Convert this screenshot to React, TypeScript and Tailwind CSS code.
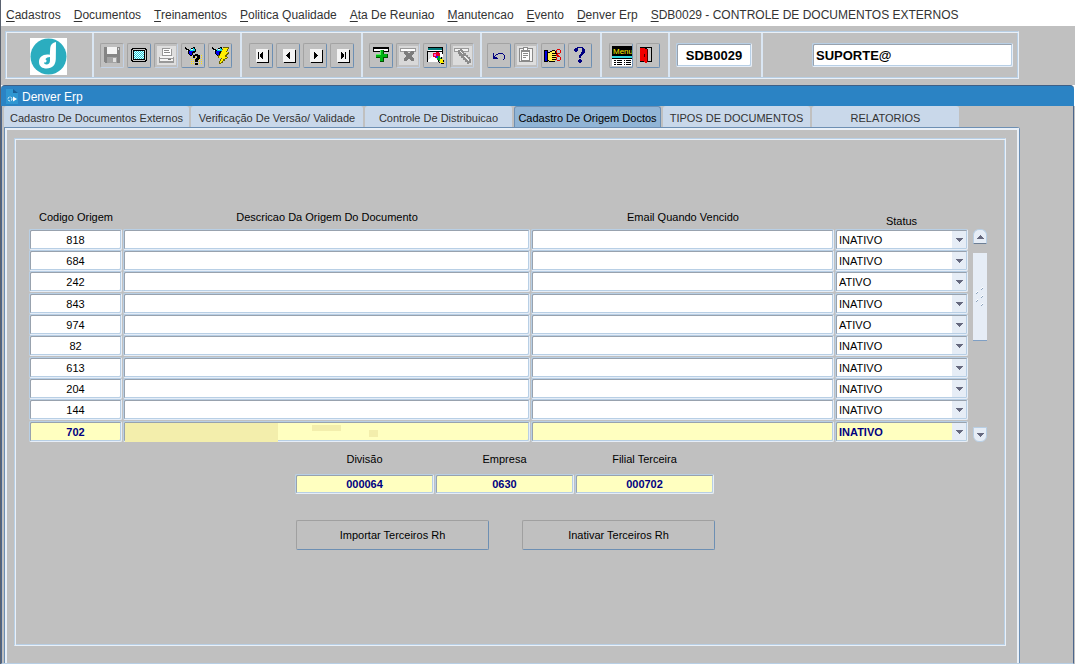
import { useState } from 'react';
import type { ReactNode } from 'react';
import clsx from 'clsx';

interface OrigemRow {
  codigo: string;
  descricao: string;
  email: string;
  status: 'ATIVO' | 'INATIVO';
}

interface ToolButton {
  label: string;
  icon: ReactNode;
  disabled?: boolean;
}

const menus = [
  'Cadastros',
  'Documentos',
  'Treinamentos',
  'Politica Qualidade',
  'Ata De Reuniao',
  'Manutencao',
  'Evento',
  'Denver Erp',
  'SDB0029 - CONTROLE DE DOCUMENTOS EXTERNOS',
];

const tabs = [
  { label: 'Cadastro De Documentos Externos', width: 'w-[185px]' },
  { label: 'Verificação De Versão/ Validade', width: 'w-[172px]' },
  { label: 'Controle De Distribuicao', width: 'w-[147px]' },
  { label: 'Cadastro De Origem Doctos', width: 'w-[147px]' },
  { label: 'TIPOS DE DOCUMENTOS', width: 'w-[147px]' },
  { label: 'RELATORIOS', width: 'w-[147px]' },
];

const initialRows: OrigemRow[] = [
  { codigo: '818', descricao: '', email: '', status: 'INATIVO' },
  { codigo: '684', descricao: '', email: '', status: 'INATIVO' },
  { codigo: '242', descricao: '', email: '', status: 'ATIVO' },
  { codigo: '843', descricao: '', email: '', status: 'INATIVO' },
  { codigo: '974', descricao: '', email: '', status: 'ATIVO' },
  { codigo: '82', descricao: '', email: '', status: 'INATIVO' },
  { codigo: '613', descricao: '', email: '', status: 'INATIVO' },
  { codigo: '204', descricao: '', email: '', status: 'INATIVO' },
  { codigo: '144', descricao: '', email: '', status: 'INATIVO' },
  { codigo: '702', descricao: '', email: '', status: 'INATIVO' },
];

// Sunken two-pixel frame shared by every text field
const fieldFrame =
  'rounded-[2px] border border-t-[#b8cfe5] border-l-[#b8cfe5] border-r-[#e6eef8] border-b-[#e6eef8] shadow-[inset_1px_1px_0_#98a2ae,inset_-1px_-1px_0_#b8cfe5] outline-none';

const groupFrame =
  'border border-t-[#b8cfe5] border-l-[#b8cfe5] border-r-[#e9f0f8] border-b-[#e9f0f8] shadow-[inset_1px_1px_0_#e9f0f8,inset_-1px_-1px_0_#b8cfe5]';

function Icon({ children }: { children: ReactNode }) {
  return (
    <svg viewBox="1 1 22 23" width="22" height="23" shapeRendering="crispEdges" aria-hidden="true">
      {children}
    </svg>
  );
}

function NavIcon({ children }: { children: ReactNode }) {
  return (
    <Icon>
      <path d="M8 7h12v13h-12z" fill="#000" />
      <path d="M7 6h12v13h-12z" fill="#f4f4f4" />
      {children}
    </Icon>
  );
}

function Flashlight() {
  return (
    <>
      <path d="M4 4h1v1h1v1h2v1h1v-1h1v-1h2v-1h2v2h1v3h-1v1h-2v2h-1v1h-2v-1h-1v-1h-1v-3h-1v-1h-1v-1h-1z" fill="#000" />
      <path d="M9 6h3v-1h1v1h1v2h-5z" fill="#00d8ee" />
      <path d="M6 7h1v1h-1zM10 7h2v-1h-2z" fill="#e8ffff" />
      <path d="M8 8h4v1h-1v3h-2v-1h-1z" fill="#0000f0" />
    </>
  );
}

const fileTools: ToolButton[] = [
  {
    label: 'Salvar',
    disabled: true,
    icon: (
      <Icon>
        <path d="M4 4h16v16h-15v-1h-1z" fill="#858585" />
        <path d="M7 4h10v7h-10z" fill="#f4f4f4" />
        <path d="M18 5h1v2h-1z" fill="#d8d8d8" />
        <path d="M7 14h10v6h-10z" fill="#a4a4a4" />
        <path d="M13 15h3v4h-3z" fill="#e0e0e0" />
      </Icon>
    ),
  },
  {
    label: 'Tela',
    icon: (
      <Icon>
        <path d="M5 5h14v1h1v12h-1v1h-14v-1h-1v-12h1z" fill="#000" />
        <path d="M6 6h12v1h1v10h-1v1h-12v-1h-1v-10h1z" fill="#c8c8c8" />
        <path d="M6 7h12v10h-12z" fill="#000" />
        <path d="M7 8h10v8h-10z" fill="#e8ffff" />
        {[8, 9, 10, 11, 12, 13, 14, 15].map((y) => (
          <path key={y} d={`M${7 + (y % 2)} ${y}.5h10`} stroke="#20c8d8" strokeDasharray="1 1" />
        ))}
        <path d="M17 8h1v8h-1z" fill="#000" />
      </Icon>
    ),
  },
  {
    label: 'Imprimir',
    disabled: true,
    icon: (
      <Icon>
        <path d="M3 3h19v19h-19z" fill="#dedede" />
        <path d="M8 5h8v1h2v7h-10z" fill="#999" />
        <path d="M9 6h8v6h-8z" fill="#fff" />
        <path d="M10 7h5v1h-5zM10 9h6v1h-6z" fill="#888" />
        <path d="M5 14h15v6h-15z" fill="#999" />
        <path d="M6 13h13v2h-13zM6 16h13v2h-13z" fill="#f4f4f4" />
        <path d="M14 16h3v1h-3z" fill="#777" />
      </Icon>
    ),
  },
  {
    label: 'Entrar consulta',
    icon: (
      <Icon>
        {[12, 14, 16, 18, 20].map((y) => (
          <path key={y} d={`M${y > 13 ? 10 : 18} ${y}.5h${y > 13 ? 12 : 4}`} stroke="#ffe800" strokeDasharray="1 1" />
        ))}
        <Flashlight />
        <path d="M12 12h2v-1h3v1h2v4h-1v1h-1v2h-3v-3h1v-1h1v-2h-2v2h-2zM14 20h3v2h-3z" fill="#000" />
      </Icon>
    ),
  },
  {
    label: 'Executar consulta',
    icon: (
      <Icon>
        <Flashlight />
        <path d="M15 4h6v2h-1v2h-1v1h2v2h-1v1h-1v2h1v1h-1v1h-2v2h-2v2h-2v1h-2v-3h1v-2h1v-1h-3v-3h2v-2h1v-2h1v-2h1z" fill="#6b6400" />
        <path d="M15 5h5v1h-1v2h-1v1h2v1h-1v1h-1v1h-1v2h2v1h-2v1h-2v2h-1v1h-1v1h-1v-2h1v-2h1v-1h-3v-2h1v-2h1v-2h1v-2h1z" fill="#ffee00" />
      </Icon>
    ),
  },
];

const navTools: ToolButton[] = [
  {
    label: 'Primeiro registro',
    icon: (
      <NavIcon>
        <path d="M9 9h1v7h-1zM14 9v7h-1v-1h-1v-1h-1v-3h1v-1h1v-1z" fill="#000" />
      </NavIcon>
    ),
  },
  {
    label: 'Registro anterior',
    icon: (
      <NavIcon>
        <path d="M14 9v7h-1v-1h-1v-1h-1v-1h-1v-1h1v-1h1v-1h1v-1z" fill="#000" />
      </NavIcon>
    ),
  },
  {
    label: 'Próximo registro',
    icon: (
      <NavIcon>
        <path d="M11 9v7h1v-1h1v-1h1v-1h1v-1h-1v-1h-1v-1h-1v-1z" fill="#000" />
      </NavIcon>
    ),
  },
  {
    label: 'Último registro',
    icon: (
      <NavIcon>
        <path d="M11 9v7h1v-1h1v-1h1v-3h-1v-1h-1v-1zM15 9h1v7h-1z" fill="#000" />
      </NavIcon>
    ),
  },
];

const recordTools: ToolButton[] = [
  {
    label: 'Inserir registro',
    icon: (
      <Icon>
        <path d="M4 4h16v5h-16z" fill="#000" />
        <path d="M5 6h14v2h-14z" fill="#fff" />
        <path d="M11 7h4v4h4v4h-4v4h-4v-4h-4v-4h4z" fill="#005000" />
        <path d="M11 7h3v4h4v3h-4v4h-3v-4h-4v-3h4z" fill="#00b414" />
        <path d="M11 7h1v5h-5v-1h4z" fill="#5cf060" />
      </Icon>
    ),
  },
  {
    label: 'Excluir registro',
    disabled: true,
    icon: (
      <Icon>
        <path d="M3 3h19v19h-19z" fill="#d8d8d8" />
        <path d="M4 5h16v4h-16z" fill="#999" />
        <path d="M5 6h14v2h-14z" fill="#fff" />
        <path d="M8 8h3v1h1v1h2v-1h1v-1h3v3h-1v1h-1v2h1v1h1v3h-3v-1h-1v-1h-2v1h-1v1h-3v-3h1v-1h1v-2h-1v-1h-1z" fill="#7c7c7c" />
      </Icon>
    ),
  },
  {
    label: 'Editar',
    icon: (
      <Icon>
        <path d="M5 5h15v9h-15z" fill="#fff" />
        <path d="M5 5h15v2h-15z" fill="#007878" />
        <path d="M4 8h15v1h-15zM4 8h1v11h-1zM5 4h15v1h-15zM19 5h1v6h-1zM4 18h12v1h-12z" fill="#000" />
        <path d="M5 9h12v9h-12z" fill="#e4e4e4" />
        <path d="M5 18l5-6 3 4 3 2v1h-11z" fill="#fff" />
        <path d="M10 10h3v-1h3v1h1v4h-2v1h-3v-1h-2z" fill="#e8002c" />
        <path d="M11 11h2v2h-2z" fill="#ff50e8" />
        <path d="M13 13h2v2h-2z" fill="#2020ff" />
        <path d="M15 13h2v2h1v3h-2v-1h-2v-2h1z" fill="#00b020" />
        <path d="M17 16h3v2h1v3h-2v-1h-2z" fill="#fff000" />
        <path d="M18 14h1v2h-1zM15 17h1v2h1v1h-1v-1h-1zM20 17h1v2h-1zM18 20h3v1h-3z" fill="#000" />
      </Icon>
    ),
  },
  {
    label: 'Limpar registro',
    disabled: true,
    icon: (
      <Icon>
        <path d="M3 3h19v19h-19z" fill="#dcdcdc" />
        <path d="M4 5h15v4h-15z" fill="#999" />
        <path d="M5 6h13v2h-13z" fill="#f4f4f4" />
        <path d="M8 7h2v-1h2v1h1v1h1v2h2v2h2v2h2v2h1v4h-2v1h-2v-2h-2v-2h-2v-2h-2v-2h-2v-2h-1z" fill="#8c8c8c" />
        <path d="M10 8h1v1h1v1h1v1h-1v-1h-1v-1h-1zM14 13h2v1h1v1h1v1h1v2h-1v-1h-1v-1h-1v-1h-1v-1h-1z" fill="#eee" />
      </Icon>
    ),
  },
];

const editTools: ToolButton[] = [
  {
    label: 'Desfazer',
    icon: (
      <Icon>
        <path d="M6 10h1v3h1v-1h1v-1h2v-1h5v1h1v1h1v4h-1v1h-1v-1h1v-4h-1v-1h-5v1h-2v1h-1v1h2v1h1v1h-5z" fill="#000080" />
      </Icon>
    ),
  },
  {
    label: 'Colar',
    disabled: true,
    icon: (
      <Icon>
        <path d="M3 3h19v19h-19z" fill="#dedede" />
        <path d="M5 5h14v14h-14z" fill="#8a8a8a" />
        <path d="M6 6h12v12h-12z" fill="#f6f6f6" />
        <path d="M9 4h5v3h2v11h-9v-11h2z" fill="#8a8a8a" />
        <path d="M10 5h3v2h-3zM8 9h7v8h-7z" fill="#fff" />
        <path d="M9 10h5v1h-5zM9 12h5v1h-5zM9 14h3v1h-3z" fill="#8a8a8a" />
      </Icon>
    ),
  },
  {
    label: 'Recortar',
    icon: (
      <Icon>
        <path d="M3 7h4v12h-4z" fill="#000" />
        <path d="M4 8h2v10h-2z" fill="#0000e0" />
        <path d="M7 9h2v-1h2v-1h3v1h1v2h2v2h-2v5h-1v2h-6v-1h-1z" fill="#000" />
        <path d="M7 10h2v-1h2v-1h3v2h-3v1h5v1h-5v1h4v1h-4v1h4v1h-4v1h3v1h-6v-1h-1z" fill="#ffee50" />
        <path d="M16 6h3v1h1v3h-1v1h-2v1h1v1h1v1h1v3h-1v1h-3v-1h-1v-3h1v-1h-1v-2h1v-1h-1v-3h1zM16 7v3h3v-3zM16 14v3h3v-3z" fill="#e00000" fillRule="evenodd" />
      </Icon>
    ),
  },
  {
    label: 'Ajuda',
    icon: (
      <Icon>
        <path d="M7 5h2v-1h6v1h1v1h1v4h-1v1h-1v1h-1v1h-1v2h-2v-3h1v-1h1v-2h1v-4h-4v3h-1v1h-2v-1h-1v-2h1zM10 17h1v-1h2v1h1v2h-1v1h-2v-1h-1z" fill="#000080" />
      </Icon>
    ),
  },
];

const exitTools: ToolButton[] = [
  {
    label: 'Menu',
    icon: (
      <Icon>
        <path d="M3 3h20v10h-20z" fill="#000" />
        <text x="4" y="11" fontFamily="Liberation Sans Narrow, Liberation Sans, sans-serif" fontSize="8" fill="#fff200">
          Menu
        </text>
        <path d="M3 13h20v2h-20z" fill="#30d8e0" />
        <path d="M3 15h20v1h-20z" fill="#000" />
        <path d="M3 16h20v7h-20z" fill="#fff" />
        <path d="M5 17h2v1h-2zM8 17h5v1h-5zM15 17h1v1h-1zM17 17h5v1h-5zM5 19h2v1h-2zM8 19h5v1h-5zM15 19h1v1h-1zM17 19h5v1h-5zM5 21h2v1h-2zM8 21h5v1h-5zM15 21h1v1h-1zM17 21h5v1h-5z" fill="#000" />
      </Icon>
    ),
  },
  {
    label: 'Sair',
    icon: (
      <Icon>
        <path d="M4 4h12v15h-12z" fill="#000" />
        <path d="M11 5h4v13h-4z" fill="#c8c8c8" />
        <path d="M4 5h5v1h2v14h-2v-1h-1v-1h-4z" fill="#f00000" />
        <path d="M8 11h1v3h-1zM11 6h1v13h-1z" fill="#500000" />
      </Icon>
    ),
  },
];

function ToolGroup({ tools, className }: { tools: ToolButton[]; className: string }) {
  return (
    <div className={clsx('flex h-full shrink-0 items-start gap-[3px] border-r-2 border-[#dae6f3] pt-[10px]', className)}>
      {tools.map((tool) => (
        <button
          key={tool.label}
          type="button"
          aria-label={tool.label}
          disabled={tool.disabled}
          className={clsx(
            'h-[25px] w-6 shrink-0 overflow-hidden rounded-[2px] border border-t-[#a3a3a3] border-l-[#a3a3a3]',
            tool.disabled ? 'border-r-[#c3d2e6] border-b-[#c3d2e6]' : 'border-r-[#6d8fb3] border-b-[#6d8fb3]'
          )}
        >
          {tool.icon}
        </button>
      ))}
    </div>
  );
}

function Toolbar() {
  return (
    <div className="bg-[#c0c0c0] pt-[5px] pr-14 pb-[6px] pl-1">
      <div className={clsx('flex h-12 items-start p-px', groupFrame)}>
        <div className="h-full w-[87px] shrink-0 border-r-2 border-[#dae6f3] pt-[5px] pl-[23px]">
          <svg viewBox="0 0 37 37" width="37" height="37" role="img" aria-label="Denver">
            <path d="M0 0h37v37H0z" fill="#fff" />
            <circle cx="18.500" cy="18.500" r="18" fill="#2badbf" />
            <path
              d="M26 4c-3.500.5-5.500 2.500-5.800 6l-.4 6.800c-6-1.300-10.800 1.700-10.800 7.200 0 4.500 3.500 6.500 7.500 6.500 6 0 9-3.500 9.300-9.500z"
              fill="#fff"
            />
            <path d="M20 19v3.500c0 2.500-1.500 4-3.500 4-1.500 0-2.500-1-2.500-2.300 1 .6 2.300.2 2.500-1 .2-1-.4-1.700-1.200-2 1.200-1.500 2.700-2.200 4.700-2.200z" fill="#2badbf" />
          </svg>
        </div>
        <ToolGroup tools={fileTools} className="w-[148px] pl-[6px]" />
        <ToolGroup tools={navTools} className="w-[121px] pl-[7px]" />
        <ToolGroup tools={recordTools} className="w-[119px] pl-[6px]" />
        <ToolGroup tools={editTools} className="w-[120px] pl-[5px]" />
        <ToolGroup tools={exitTools} className="w-[68px] pl-[7px]" />
        <div className="h-full w-[93px] shrink-0 border-r-2 border-[#dae6f3] pt-[10px] pl-[6px]">
          <input
            aria-label="Programa"
            defaultValue="SDB0029"
            className={clsx('h-6 w-[76px] bg-white text-center text-[13px] font-bold text-black', fieldFrame)}
          />
        </div>
        <div className="h-full flex-1 pt-[10px] pr-1 pl-[49px]">
          <input
            aria-label="Usuário"
            defaultValue="SUPORTE@"
            className={clsx('h-6 w-full bg-white px-[3px] text-[13px] font-bold text-black', fieldFrame)}
          />
        </div>
      </div>
    </div>
  );
}

function RecordScrollbar() {
  return (
    <div className="flex w-[14px] flex-col items-center self-stretch pt-5">
      <button
        type="button"
        aria-label="Rolar para cima"
        className="flex h-[15px] w-full items-center justify-center rounded-t-[6px] border border-[#b8cfe5] border-b-[#6d7f95] bg-[#e6edf6]"
      >
        <svg viewBox="0 0 7 4" width="7" height="4" shapeRendering="crispEdges" aria-hidden="true">
          <path d="M3 0h1v1h1v1h1v1h1v1h-7v-1h1v-1h1v-1h1z" fill="#66697f" />
        </svg>
      </button>
      <div className="w-full flex-1 pt-[9px]">
        <div className="flex h-[88px] items-center justify-center border-b border-[#7f9fc4] bg-[#e6edf6]">
          <svg viewBox="0 0 8 20" width="8" height="20" aria-hidden="true">
            <path d="M5 3l2-2M0 7l2-2M5 11l2-2M0 15l2-2M5 19l2-2" stroke="#8ba3bd" />
            <path d="M5 2l2-2M0 6l2-2M5 10l2-2M0 14l2-2M5 18l2-2" stroke="#fff" />
          </svg>
        </div>
      </div>
      <button
        type="button"
        aria-label="Rolar para baixo"
        className="flex h-[15px] w-full items-center justify-center rounded-b-[6px] border border-[#b8cfe5] bg-[#e6edf6]"
      >
        <svg viewBox="0 0 7 4" width="7" height="4" shapeRendering="crispEdges" aria-hidden="true">
          <path d="M0 0h7v1h-1v1h-1v1h-1v1h-1v-1h-1v-1h-1v-1h-1z" fill="#66697f" />
        </svg>
      </button>
    </div>
  );
}

function OrigemTable() {
  const [rows, setRows] = useState(initialRows);
  const [current, setCurrent] = useState(9);

  const update = (index: number, field: keyof OrigemRow, value: string) => {
    setRows(rows.map((row, i) => (i === index ? ({ ...row, [field]: value } as OrigemRow) : row)));
  };

  return (
    <table className="min-w-0 flex-1 table-fixed border-collapse">
      <thead>
        <tr className="h-5 leading-4">
          <th className="w-[94px] p-0 align-top font-normal">Codigo Origem</th>
          <th className="p-0 align-top font-normal">Descricao Da Origem Do Documento</th>
          <th className="w-[304px] p-0 align-top font-normal">Email Quando Vencido</th>
          <th className="w-[133px] p-0 align-bottom font-normal">Status</th>
        </tr>
      </thead>
      <tbody>
        {rows.map((row, index) => {
          const active = index === current;
          const cell = clsx(
            'block h-[21px] w-full',
            fieldFrame,
            active ? 'bg-[#ffffc0] font-bold text-[#000080]' : 'bg-white text-black'
          );
          return (
            <tr
              key={index}
              onFocus={() => setCurrent(index)}
              className="h-[21px] [&:nth-child(3n)]:h-[22px]"
            >
              <td className="p-0 pr-px align-top">
                <input
                  aria-label={`Codigo Origem ${index + 1}`}
                  value={row.codigo}
                  onChange={(e) => update(index, 'codigo', e.target.value)}
                  className={clsx(cell, 'text-center')}
                />
              </td>
              <td className="p-0 pr-px align-top">
                <div className="relative">
                  <input
                    aria-label={`Descricao ${index + 1}`}
                    value={row.descricao}
                    onChange={(e) => update(index, 'descricao', e.target.value)}
                    className={clsx(cell, 'px-1')}
                  />
                  {active && (
                    <div className="pointer-events-none">
                      <span className="absolute top-[2px] bottom-0 left-[2px] w-[153px] bg-[#f3eeac]" />
                      <span className="absolute top-1 left-[189px] h-[6px] w-[29px] bg-[#f3eeac]" />
                      <span className="absolute top-[9px] left-[246px] h-[7px] w-[9px] bg-[#f3eeac]" />
                    </div>
                  )}
                </div>
              </td>
              <td className="p-0 pr-px align-top">
                <input
                  aria-label={`Email ${index + 1}`}
                  value={row.email}
                  onChange={(e) => update(index, 'email', e.target.value)}
                  className={clsx(cell, 'px-1')}
                />
              </td>
              <td className="p-0 align-top">
                <div className="relative">
                  <select
                    aria-label={`Status ${index + 1}`}
                    value={row.status}
                    onChange={(e) => update(index, 'status', e.target.value)}
                    className={clsx(cell, 'appearance-none pt-[2px] pr-4 pl-[3px]')}
                  >
                    <option value="ATIVO">ATIVO</option>
                    <option value="INATIVO">INATIVO</option>
                  </select>
                  <span className="pointer-events-none absolute top-[2px] right-[2px] bottom-[2px] flex w-[14px] items-center justify-center bg-[#e6edf6]">
                    <svg viewBox="0 0 7 4" width="7" height="4" shapeRendering="crispEdges" aria-hidden="true">
                      <path d="M0 0h7v1h-1v1h-1v1h-1v1h-1v-1h-1v-1h-1v-1h-1z" fill="#66697f" />
                    </svg>
                  </span>
                </div>
              </td>
            </tr>
          );
        })}
      </tbody>
    </table>
  );
}

function TerceiroField({ id, label, value }: { id: string; label: string; value: string }) {
  return (
    <div className="flex w-[139px] flex-col">
      <label htmlFor={id} className="pb-[7px] text-center leading-4">
        {label}
      </label>
      <input
        id={id}
        defaultValue={value}
        className={clsx('h-5 bg-[#ffffc0] text-center font-bold text-[#000080]', fieldFrame)}
      />
    </div>
  );
}

export default function App() {
  const [activeTab, setActiveTab] = useState(3);

  const actionButton =
    'h-[30px] w-[193px] rounded-[2px] border border-t-[#a0a0a0] border-l-[#a0a0a0] border-r-[#6d8fb3] border-b-[#6d8fb3]';

  return (
    <div className="flex min-h-screen flex-col border-l border-[#5a6270] bg-[#c0c0c0] font-['Liberation_Sans',Arial,sans-serif] text-[11px] text-black">
      <nav className="flex h-[26px] items-center gap-[13px] bg-white pt-1 pl-[5px] text-[12px] whitespace-nowrap text-[#333]">
        {menus.map((menu) => (
          <button key={menu} type="button">
            <span className="underline underline-offset-2">{menu[0]}</span>
            {menu.slice(1)}
          </button>
        ))}
      </nav>

      <Toolbar />

      <div className="bg-white pr-px">
        <header className="flex h-[21px] items-center gap-1 rounded-t-[4px] border-t border-[#3d5f86] bg-[#2b83c4] pt-px pl-[5px] text-[12px] text-white">
          <svg viewBox="0 0 12 15" width="12" height="15" aria-hidden="true">
            <path d="M0 0h7l5 4v11H0z" fill="#2f97d2" />
            <path d="M7 0l5 4H7z" fill="#1b5f95" />
            <path d="M7 7.500l4 2.500-4 2.500z" fill="#fff" />
            <circle cx="4" cy="10" r="2" fill="none" stroke="#fff" strokeDasharray="2 1" />
          </svg>
          <h1>Denver Erp</h1>
        </header>
      </div>

      <main className="mr-px flex flex-1 flex-col border-r border-b border-l border-[#4c668c] border-b-[#b8cfe5] pr-[53px] pl-[2px]">
        <div role="tablist" className="flex h-[21px] gap-[2px]">
          {tabs.map((tab, index) => (
            <button
              key={tab.label}
              type="button"
              role="tab"
              aria-selected={index === activeTab}
              onClick={() => setActiveTab(index)}
              className={clsx(
                'shrink-0 rounded-t-[3px] border border-b-0 pt-[3px] whitespace-nowrap',
                tab.width,
                index === activeTab
                  ? 'border-[#6d8fb3] bg-[#91b5d6] text-black'
                  : 'border-[#c9d8ea] bg-[#c9d8ea] text-[#333]'
              )}
            >
              {tab.label}
            </button>
          ))}
        </div>

        <section className="flex flex-1 flex-col rounded-tr-[3px] border border-b-0 border-[#6d8fb3]">
          <div className="flex flex-1 flex-col border-2 border-b-0 border-[#e9f0f8] pt-2 pr-[11px] pb-[17px] pl-[7px]">
            <div className={clsx('flex-1 pt-[70px] pr-[18px] pl-[14px]', groupFrame)}>
              <div className="flex gap-[5px]">
                <OrigemTable />
                <RecordScrollbar />
              </div>

              <div className="mt-[9px] ml-[266px] flex gap-px">
                <TerceiroField id="divisao" label="Divisão" value="000064" />
                <TerceiroField id="empresa" label="Empresa" value="0630" />
                <TerceiroField id="filial" label="Filial Terceira" value="000702" />
              </div>

              <div className="mt-[26px] ml-[267px] flex gap-[33px]">
                <button type="button" className={actionButton}>
                  Importar Terceiros Rh
                </button>
                <button type="button" className={actionButton}>
                  Inativar Terceiros Rh
                </button>
              </div>
            </div>
          </div>
        </section>
      </main>
    </div>
  );
}
